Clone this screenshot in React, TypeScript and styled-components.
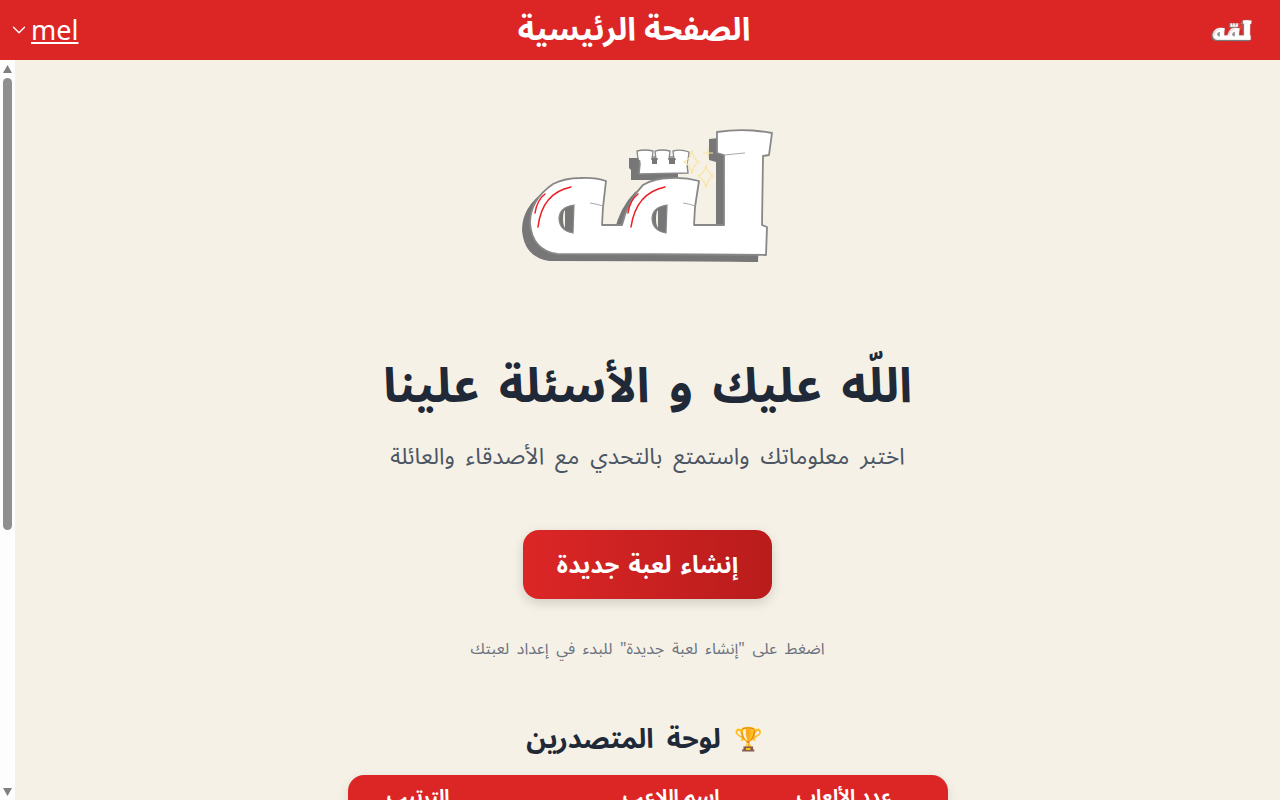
import React from "react";
import styled, { createGlobalStyle } from "styled-components";
import { ChevronDown } from "lucide-react";

const Global = createGlobalStyle`
  html, body { margin: 0; height: 100%; overflow: hidden; }
  body { font-family: "Noto Sans Arabic", "Noto Sans", "DejaVu Sans", sans-serif; background: #f5f1e6; }
  * { box-sizing: border-box; }
`;

const Page = styled.div`
  height: 800px;
  display: flex;
  flex-direction: column;
  direction: rtl;
`;

const Header = styled.header`
  height: 60px;
  flex: none;
  background: #dc2626;
  color: #fff;
  display: grid;
  grid-template-columns: 1fr auto 1fr;
  align-items: center;
  padding: 0 27px 0 8px;
`;

const Title = styled.div`
  font-size: 32px;
  line-height: 46px;
  font-weight: 700;
  text-align: center;
  padding-left: 7px;
`;

const UserMenu = styled.div`
  justify-self: end;
  display: flex;
  align-items: center;
  gap: 1px;
  direction: ltr;
`;

const UserName = styled.a`
  font-family: "Noto Sans", sans-serif;
  font-size: 27px;
  line-height: 38px;
  color: #fff;
  text-decoration: underline;
`;

const Body = styled.div`
  flex: 1;
  min-height: 0;
  display: flex;
  flex-direction: row-reverse;
`;

const ScrollRail = styled.div`
  width: 15px;
  flex: none;
  background: #fdfdfd;
  display: flex;
  flex-direction: column;
  align-items: center;
  padding: 5px 3px 4px;
`;

const RailArrow = styled.svg<{ $end?: boolean }>`
  width: 9px;
  height: 8px;
  flex: none;
  margin-top: ${(p) => (p.$end ? "auto" : "0")};
`;

const RailThumb = styled.div`
  width: 9px;
  height: 452px;
  margin-top: 5px;
  border-radius: 5px;
  background: #8f8f8f;
`;

const Scroller = styled.main`
  flex: 1;
  min-width: 0;
  overflow: hidden;
  background: #f5f1e6;
`;

const Content = styled.div`
  display: flex;
  flex-direction: column;
  align-items: center;
  padding: 50px 0 60px;
`;

const HeroLogo = styled.svg`
  width: 300px;
  height: 170px;
  margin: 0 0 72px 5px;
`;

const SmallLogo = styled.svg`
  width: 42px;
  height: 24px;
`;

const Heading = styled.h1`
  margin: 0;
  font-size: 48px;
  line-height: 70px;
  font-weight: 700;
  word-spacing: 7px;
  color: #1f2937;
`;

const Lead = styled.p`
  margin: 18px 0 0;
  font-size: 23px;
  line-height: 34px;
  word-spacing: 5px;
  color: #4b5563;
`;

const StartButton = styled.button`
  margin-top: 56px;
  width: 249px;
  height: 69px;
  padding: 2px 0 0;
  border: 0;
  border-radius: 16px;
  font: inherit;
  font-size: 24px;
  font-weight: 700;
  word-spacing: 3px;
  color: #fff;
  background: linear-gradient(to right, #dc2626, #b91c1c);
  box-shadow: 0 4px 12px rgba(0, 0, 0, 0.15);
`;

const Hint = styled.p`
  margin: 37px 0 0;
  font-size: 16px;
  line-height: 26px;
  word-spacing: 3.5px;
  color: #6b7280;
`;

const BoardTitle = styled.h2`
  margin: 59px 6px 0 0;
  display: flex;
  align-items: center;
  gap: 13px;
  font-size: 27px;
  line-height: 38px;
  font-weight: 700;
  word-spacing: 6px;
  color: #1f2937;
`;

const Trophy = styled.span`
  font-size: 23px;
`;

const Board = styled.table`
  margin-top: 16px;
  width: 600px;
  table-layout: fixed;
  border-collapse: separate;
  border-spacing: 0;
  border-radius: 16px;
  overflow: hidden;
  background: #fff;
  box-shadow: 0 4px 12px rgba(0, 0, 0, 0.1);
`;

const HeadCell = styled.th<{ $w: number }>`
  width: ${(p) => p.$w}px;
  background: #dc2626;
  color: #fff;
  font-size: 19px;
  line-height: 30px;
  font-weight: 700;
  text-align: start;
  padding: 7px 56px 7px 0;
`;

const Cell = styled.td`
  padding: 14px 56px 14px 0;
  text-align: start;
  color: #1f2937;
  font-size: 16px;
  border-top: 1px solid #eee;
`;

const Art = () => {
  const body =
    "M217 22 Q245 18 272 23 L269 45 L263 46 L262 115 L267 117 L266 145 Q200 144 57 144 Q32 140 30 113 Q30 90 53 74 Q65 68 80 68 Q95 67 106 71 L103 97 L102 115 L122 115 Q128 90 143 75 Q155 68 170 68 Q185 67 199 71 L195 97 L194 115 L224 115 L224 45 L217 43 Z";
  const crownBase = "M139 47 L187 47 L187 54 L188 63 L139 64 L140 54 Z";
  const crownShadow = "M129 48 L140 48 L140 64 L178 64 L178 70 L131 70 L131 60 L129 58 Z";
  return (
    <>
      <path d={body} transform="translate(-8 7)" fill="#777" />
      <path d={crownShadow} fill="#777" />
      <path d={crownBase} fill="#fff" stroke="#888" strokeWidth="1.5" strokeLinejoin="round" />
      <g fill="#fff" stroke="#888" strokeWidth="1.3" strokeLinejoin="round">
        <path d="M137 41 Q145 39 153 41 L152 49 L138 49 Z" />
        <path d="M155 41 Q162 39 170 41 L169 49 L156 49 Z" />
        <path d="M173 41 Q181 39 189 42 L188 50 L174 49 Z" />
      </g>
      <path d="M139 48h12v2h-12zM158 48h10v2h-10zM176 48h11v2h-11zM141 50h46v5h-46z" fill="#fff" />
      <path d="M152 48h5v6h-5zM169 48h6v6h-6z" fill="#777" />
      <path d={body} fill="#fff" stroke="#888" strokeWidth="1.8" strokeLinejoin="round" />
      <path d="M74 95 Q59 97 59 109 Q60 121 73 123 Z" fill="#777" stroke="#888" strokeWidth="1.2" />
      <path d="M167 95 Q152 97 152 109 Q153 121 166 123 Z" fill="#777" stroke="#888" strokeWidth="1.2" />
      <path d="M63 109 Q63 102 65 100 L65 118 Q63 115 63 109Z" fill="#f5f1e6" />
      <path d="M156 109 Q156 102 158 100 L158 118 Q156 115 156 109Z" fill="#f5f1e6" />
      <path d="M90 93 Q97 94 103 96 M183 93 Q190 94 195 96 M225 45 Q233 44 245 43" fill="none" stroke="#aaa" strokeWidth="1" />
      <g fill="none" stroke="#f01c24" strokeWidth="1.5" strokeLinecap="round">
        <path d="M71 77 Q42 83 38 117" />
        <path d="M45 84 Q37 90 35 103" />
        <path d="M165 77 Q136 83 131 117" />
        <path d="M138 84 Q130 90 128 103" />
      </g>
      <g fill="none" stroke="#f9e4a0" strokeWidth="1.2">
        <path d="M192 40 Q193 49 199 52 Q193 55 192 64 Q191 55 184 52 Q191 49 192 40Z" />
        <path d="M206 55 Q207 63 213 66 Q207 70 206 78 Q205 70 198 66 Q205 63 206 55Z" />
        <path d="M208 38 V48 M203 43 H213" />
      </g>
    </>
  );
};

const rows = [
  { rank: 1, name: "mel", games: 12 },
  { rank: 2, name: "sara", games: 9 },
  { rank: 3, name: "omar", games: 7 },
  { rank: 4, name: "lina", games: 5 },
  { rank: 5, name: "adam", games: 3 },
];

export default function App() {
  return (
    <Page>
      <Global />
      <Header>
        <SmallLogo viewBox="20 15 260 135" aria-label="لقه"><Art /></SmallLogo>
        <Title>الصفحة الرئيسية</Title>
        <UserMenu>
          <ChevronDown size={22} strokeWidth={1.5} />
          <UserName href="#">mel</UserName>
        </UserMenu>
      </Header>
      <Body>
        <ScrollRail aria-hidden="true">
          <RailArrow viewBox="0 0 9 8"><path d="M4.5 0 L9 8 L0 8 Z" fill="#808080" /></RailArrow>
          <RailThumb />
          <RailArrow $end viewBox="0 0 9 8"><path d="M0 0 L9 0 L4.5 8 Z" fill="#808080" /></RailArrow>
        </ScrollRail>
        <Scroller>
          <Content>
            <HeroLogo viewBox="0 0 300 170" aria-label="لقه"><Art /></HeroLogo>
            <Heading>اللّه عليك و الأسئلة علينا</Heading>
            <Lead>اختبر معلوماتك واستمتع بالتحدي مع الأصدقاء والعائلة</Lead>
            <StartButton>إنشاء لعبة جديدة</StartButton>
            <Hint>اضغط على "إنشاء لعبة جديدة" للبدء في إعداد لعبتك</Hint>
            <BoardTitle><Trophy>🏆</Trophy>لوحة المتصدرين</BoardTitle>
            <Board>
              <thead>
                <tr>
                  <HeadCell $w={172}>عدد الألعاب</HeadCell>
                  <HeadCell $w={270}>اسم اللاعب</HeadCell>
                  <HeadCell $w={158}>الترتيب</HeadCell>
                </tr>
              </thead>
              <tbody>
                {rows.map((r) => (
                  <tr key={r.rank}>
                    <Cell>{r.games}</Cell>
                    <Cell>{r.name}</Cell>
                    <Cell>{r.rank}</Cell>
                  </tr>
                ))}
              </tbody>
            </Board>
          </Content>
        </Scroller>
      </Body>
    </Page>
  );
}
